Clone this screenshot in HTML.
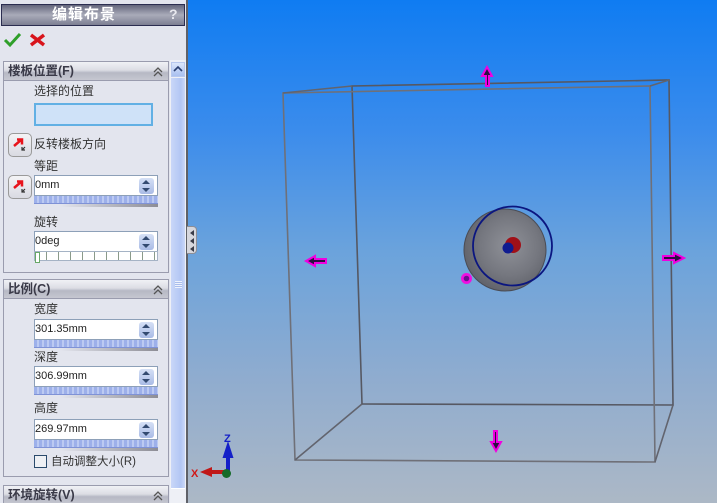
<!DOCTYPE html>
<html><head><meta charset="utf-8">
<style>
html,body{margin:0;padding:0;width:717px;height:503px;overflow:hidden;background:#e3e5ee}
*{box-sizing:border-box}
body{position:relative;font-family:"Liberation Sans","Noto Sans CJK SC",sans-serif;font-size:12px;color:#222}
.a{position:absolute}
.t{position:absolute;font-size:12px;line-height:14px;color:#333;white-space:nowrap}
.sec{position:absolute;left:3px;width:166px;border:1px solid #9a9cae;background:#e3e5ee}
.hd{position:absolute;left:3px;width:166px;height:20px;border:1px solid #9a9cae;background:linear-gradient(#f0f1f5 0,#dcdde4 45%,#b6b8c4 60%,#c6c7d1 100%);font-weight:bold;font-size:12.500px;line-height:19px;padding-left:4px;color:#3a3a48}
.hd svg{position:absolute;right:4px;top:4px}
.inp{position:absolute;left:34px;width:124px;height:21px;background:#fff;border:1px solid #8da0b8;font-size:11px;line-height:19px;color:#222;padding-left:0}
.spin{position:absolute;right:3px;top:2px;width:15px;height:16px;background:linear-gradient(#d5e0f6,#a9bbe6);border-radius:3px}
.spin:before{content:"";position:absolute;left:3px;top:2px;border:4.5px solid transparent;border-top:0;border-bottom:4px solid #334a70}
.spin:after{content:"";position:absolute;left:3px;bottom:2px;border:4.5px solid transparent;border-bottom:0;border-top:4px solid #334a70}
.bar{position:absolute;left:34px;width:124px;height:8px;background:repeating-linear-gradient(90deg,#9db0ea 0,#9db0ea 3px,#bccaf2 3px,#bccaf2 5px);border-bottom:1px solid #7f92d6}
.shadow{position:absolute;left:60px;width:98px;height:3px;background:linear-gradient(90deg,#e3e5ee,#8d8d95)}
.btn{position:absolute;left:8px;width:24px;height:24px;border:1px solid #9a9a9a;border-radius:5px;background:linear-gradient(#f4f4f6,#d9dae2)}
</style></head><body>
<!-- 3D viewport -->
<div class="a" style="left:188px;top:0;width:529px;height:503px;background:linear-gradient(#0f7cf2 0,#3b8cec 26%,#6ba3dc 50%,#8faccf 75%,#acb8c6 100%)"></div>
<div class="a" style="left:186px;top:0;width:2px;height:503px;background:#5f6168"></div>
<svg class="a" style="left:0;top:0" width="717" height="503" viewBox="0 0 717 503">
<defs>
<radialGradient id="g" cx="0.55" cy="0.45" r="0.6"><stop offset="0" stop-color="#8f9198"/><stop offset="0.6" stop-color="#75777f"/><stop offset="1" stop-color="#5e6068"/></radialGradient>
</defs>
<g fill="none" stroke="#62646e" stroke-width="1.600">
<path d="M352 86L669 80L673 405L362 404L352 86Z" stroke="#565862"/>
<path d="M283 93L650 86L655 462L295 460Z" stroke="#6f7078"/>
<path d="M283 93L352 86M650 86L669 80M655 462L673 405M295 460L362 404"/>
</g>
<circle cx="505" cy="250" r="41" fill="url(#g)" stroke="#4a4c55" stroke-width="1"/>
<circle cx="512.500" cy="246" r="39.500" fill="none" stroke="#0b1680" stroke-width="1.800"/>
<circle cx="513" cy="245" r="8" fill="#a01018"/>
<circle cx="508" cy="248" r="5.500" fill="#101c90"/>
<circle cx="466.500" cy="278.500" r="5.500" fill="#f010e0"/>
<circle cx="466.500" cy="278.500" r="2.800" fill="#6a1090"/>
<!-- handles -->
<g fill="#2a1040" stroke="#f000e0" stroke-width="2">
<path d="M487 67L492 76H489V86H486V76H482Z"/>
<path d="M306 261L315 256V259H326V263H315V266Z"/>
<path d="M684 258L674 253V256H663V260H674V263Z"/>
<path d="M496 451L491 442H494V431H497V442H501Z"/>
</g>
<!-- triad -->
<path d="M228 472V452" stroke="#1420c8" stroke-width="4"/>
<path d="M228 441L222.500 458H233.500Z" fill="#1420c8"/>
<path d="M224 472H208" stroke="#c01818" stroke-width="4"/>
<path d="M200 472L212 467V477Z" fill="#c01818"/>
<circle cx="226.500" cy="473.500" r="4.500" fill="#156a28"/>
<text x="224" y="442" font-family="Liberation Sans" font-size="11" font-weight="bold" fill="#1420c8">Z</text>
<text x="191" y="477" font-family="Liberation Sans" font-size="11" font-weight="bold" fill="#d01818">X</text>
</svg>
<!-- left panel -->
<div class="a" style="left:0;top:0;width:186px;height:503px;background:#e3e5ee"></div>
<div class="a" style="left:1px;top:4px;width:184px;height:22px;background:linear-gradient(#64667c 0,#a9abb9 50%,#7d7f92 100%);border:1px solid #2b2d50"></div>
<div class="a" style="left:52px;top:4px;height:22px;color:#fff;font-weight:bold;font-size:15px;line-height:21px;letter-spacing:1px;white-space:nowrap">编辑布景</div>
<div class="a" style="left:169px;top:5px;color:#e8e8ee;font-weight:bold;font-size:14px;line-height:19px">?</div>
<svg class="a" style="left:3px;top:32px" width="46" height="16" viewBox="0 0 46 16">
<path d="M2 8L7 13L17 2" fill="none" stroke="#2f9f2a" stroke-width="3"/>
<path d="M28 3L41 13M41 3L28 13" fill="none" stroke="#d8141c" stroke-width="3.500"/>
</svg>
<!-- sections -->
<div class="sec" style="top:61px;height:212px"></div>
<div class="hd" style="top:61px">楼板位置(F)<svg width="12" height="12" viewBox="0 0 12 12"><path d="M2 6L6 2L10 6M2 10L6 6L10 10" fill="none" stroke="#555" stroke-width="1.300"/></svg></div>
<div class="t" style="left:34px;top:84px">选择的位置</div>
<div class="a" style="left:34px;top:103px;width:119px;height:23px;background:#cfe2f8;border:2px solid #62b0e4"></div>
<div class="btn" style="top:133px"></div>
<svg class="a" style="left:12px;top:137px" width="16" height="16" viewBox="0 0 16 16"><path d="M2 9L9 3M5 2.500H10V7.500" fill="none" stroke="#e8141c" stroke-width="2.500"/><path d="M10 13L13 10M10 10V13H13" fill="none" stroke="#333" stroke-width="1.200"/></svg>
<div class="t" style="left:34px;top:137px">反转楼板方向</div>
<div class="t" style="left:34px;top:159px">等距</div>
<div class="btn" style="top:175px"></div>
<svg class="a" style="left:12px;top:179px" width="16" height="16" viewBox="0 0 16 16"><path d="M2 9L9 3M5 2.500H10V7.500" fill="none" stroke="#e8141c" stroke-width="2.500"/><path d="M10 13L13 10M10 10V13H13" fill="none" stroke="#333" stroke-width="1.200"/></svg>
<div class="inp" style="top:175px">0mm<div class="spin"></div></div>
<div class="bar" style="top:196px"></div><div class="shadow" style="top:204px"></div>
<div class="t" style="left:34px;top:215px">旋转</div>
<div class="inp" style="top:231px">0deg<div class="spin"></div></div>
<div class="a" style="left:34px;top:251px;width:124px;height:10px;background:repeating-linear-gradient(90deg,#fff 0,#fff 11px,#8a9a8a 11px,#8a9a8a 12px);border:1px solid #a5b3c5"></div>
<div class="a" style="left:35px;top:252px;width:5px;height:11px;background:#fff;border:1px solid #68a868"></div>
<div class="sec" style="top:279px;height:198px"></div>
<div class="hd" style="top:279px">比例(C)<svg width="12" height="12" viewBox="0 0 12 12"><path d="M2 6L6 2L10 6M2 10L6 6L10 10" fill="none" stroke="#555" stroke-width="1.300"/></svg></div>
<div class="t" style="left:34px;top:302px">宽度</div>
<div class="inp" style="top:319px">301.35mm<div class="spin"></div></div>
<div class="bar" style="top:340px"></div><div class="shadow" style="top:348px"></div>
<div class="t" style="left:34px;top:350px">深度</div>
<div class="inp" style="top:366px">306.99mm<div class="spin"></div></div>
<div class="bar" style="top:387px"></div><div class="shadow" style="top:395px"></div>
<div class="t" style="left:34px;top:401px">高度</div>
<div class="inp" style="top:419px">269.97mm<div class="spin"></div></div>
<div class="bar" style="top:440px"></div><div class="shadow" style="top:448px"></div>
<div class="a" style="left:34px;top:455px;width:13px;height:13px;background:#eef0f4;border:1px solid #2a4a6c"></div>
<div class="t" style="left:51px;top:455px;font-size:11.500px">自动调整大小(R)</div>
<div class="sec" style="top:485px;height:20px"></div>
<div class="hd" style="top:485px">环境旋转(V)<svg width="12" height="12" viewBox="0 0 12 12"><path d="M2 6L6 2L10 6M2 10L6 6L10 10" fill="none" stroke="#555" stroke-width="1.300"/></svg></div>
<!-- scrollbar -->
<div class="a" style="left:170px;top:60px;width:16px;height:443px;background:#eef0f6"></div>
<div class="a" style="left:171px;top:62px;width:14px;height:15px;background:linear-gradient(#dbe6fb,#a9c0f0);border:1px solid #b8c8ee"></div>
<svg class="a" style="left:173px;top:65px" width="10" height="8" viewBox="0 0 10 8"><path d="M1 6L5 2L9 6" fill="none" stroke="#2a3f70" stroke-width="1.600"/></svg>
<div class="a" style="left:171px;top:78px;width:14px;height:411px;background:linear-gradient(90deg,#c9d7f8,#b2c6f4 70%,#cbd8f8);border-bottom:1px solid #fff"></div>
<div class="a" style="left:175px;top:281px;width:7px;height:7px;background:repeating-linear-gradient(#eef2fc 0,#eef2fc 1px,#a9bdec 1px,#a9bdec 2px)"></div>
<!-- splitter handle -->
<div class="a" style="left:187px;top:226px;width:10px;height:28px;background:#d6d7dd;border:1px solid #8d8e96;border-left:0;border-radius:0 4px 4px 0"></div>
<svg class="a" style="left:189px;top:230px" width="7" height="22" viewBox="0 0 7 22"><path d="M5 0L1 3L5 6ZM5 8L1 11L5 14ZM5 16L1 19L5 22Z" fill="#3a3c48"/></svg>
</body></html>
